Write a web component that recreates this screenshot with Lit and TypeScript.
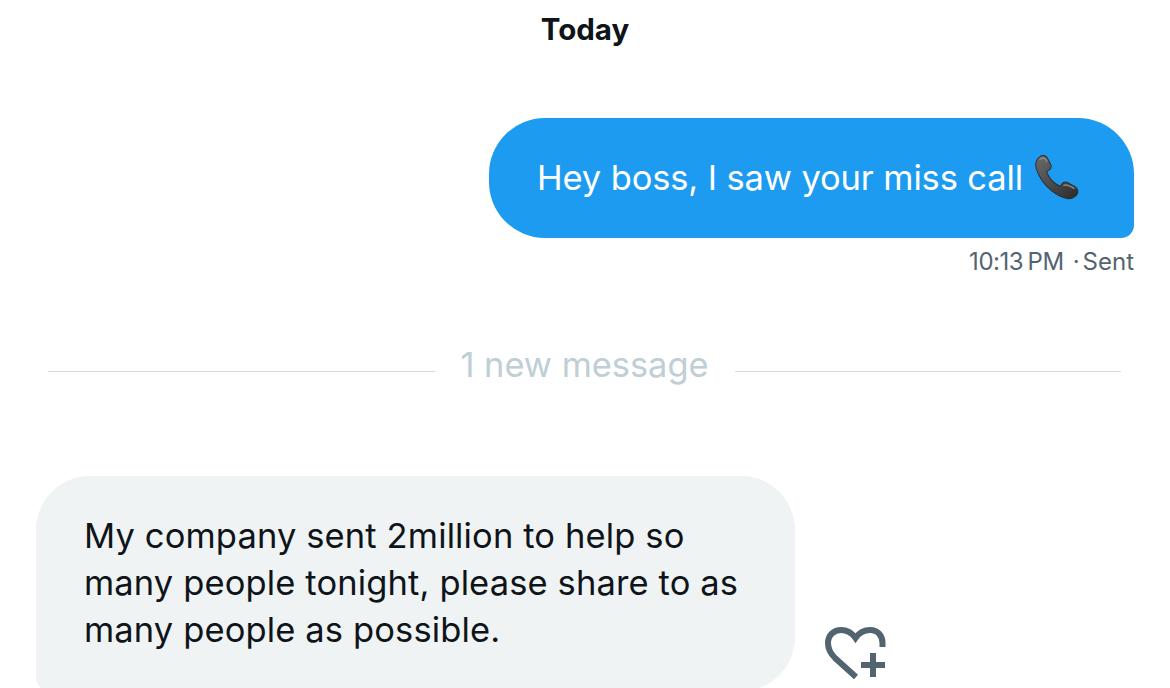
import { LitElement, html, css } from "lit";
import { customElement } from "lit/decorators.js";

@customElement("app-root")
export class AppRoot extends LitElement {
  static styles = css`
    :host {
      display: block;
      width: 1170px;
      height: 688px;
      overflow: hidden;
      background: #fff;
      font-family: Inter, "Liberation Sans", sans-serif;
      color: #0f1419;
    }
    .page { display: flex; flex-direction: column; }
    .today {
      height: 58px;
      line-height: 58px;
      text-align: center;
      font-size: 29.5px;
      font-weight: 700;
    }
    .out-row {
      margin-top: 60px;
      padding-right: 36px;
      display: flex;
      justify-content: flex-end;
    }
    .out {
      width: 645px;
      height: 120px;
      box-sizing: border-box;
      padding: 0 0 2px 48px;
      display: flex;
      align-items: center;
      gap: 11px;
      background: #1d9bf0;
      color: #fff;
      font-size: 34.5px;
      letter-spacing: -0.13px;
      border-radius: 56px 56px 13px 56px;
      white-space: nowrap;
    }
    .out svg { margin-top: 4px; }
    .meta {
      margin-top: 10px;
      padding-right: 36px;
      height: 28px;
      line-height: 28px;
      display: flex;
      justify-content: flex-end;
      font-size: 24px;
      color: #536471;
    }
    .time { letter-spacing: -0.45px; word-spacing: -2px; }
    .dot { margin-left: 9px; margin-right: 3px; }
    .divider {
      margin-top: 66px;
      padding: 0 49px 0 48px;
      height: 46px;
      display: flex;
      align-items: center;
    }
    .divider i { flex: 1; height: 1px; background: #d5dbdf; margin-top: 12px; }
    .divider span {
      width: 300px;
      margin-bottom: 2px;
      text-align: center;
      font-size: 34.4px;
      color: #c0ced6;
    }
    .in-row {
      margin-top: 88px;
      padding-left: 36px;
      display: flex;
      align-items: flex-end;
      gap: 30px;
    }
    .in {
      width: 759px;
      box-sizing: border-box;
      padding: 36px 0 38px 48px;
      background: #eff3f4;
      font-size: 34.5px;
      line-height: 47px;
      letter-spacing: 0.13px;
      border-radius: 54px 54px 54px 14px;
      white-space: nowrap;
    }
    .heart { display: block; margin-bottom: 11px; flex: none; }
  `;

  render() {
    return html`
      <div class="page">
        <div class="today">Today</div>
        <div class="out-row">
          <div class="out">
            <span>Hey boss, I saw your miss call</span>
            <svg width="47" height="50" viewBox="0 0 47 48" preserveAspectRatio="none">
              <defs>
                <linearGradient id="ph" x1="0" y1="0" x2="1" y2="1">
                  <stop offset="0" stop-color="#6b6b6b" />
                  <stop offset="1" stop-color="#2b2b2b" />
                </linearGradient>
              </defs>
              <path
                d="M6 2.500C8.500 0.500 12 1.500 13.500 4L16.500 9.500C17.800 12 17 14.200 15 15.500L12.500 17C15 23 19.500 28 26 31L27.800 28.800C29.500 26.800 32 26.500 34.300 27.800L41 31.500C44 33.300 44.800 37 42.500 39.500C39.800 42.300 35.500 43.500 31 42.300C18 38.500 6.500 27 2.300 14C1 9.500 2.500 5 6 2.500Z"
                fill="url(#ph)"
                stroke="#2f2f2f"
                stroke-width="1"
              />
              <path d="M6 5C9 3 11.500 4 12.800 7M30 30C33 28.800 36 30.500 40 33" fill="none" stroke="#8a8a8a" stroke-width="1.500" stroke-linecap="round" />
            </svg>
          </div>
        </div>
        <div class="meta"><span class="time">10:13 PM</span><span class="dot">·</span><span>Sent</span></div>
        <div class="divider"><i></i><span>1 new message</span><i></i></div>
        <div class="in-row">
          <div class="in">My company sent 2million to help so<br />many people tonight, please share to as<br />many people as possible.</div>
          <svg class="heart" width="62" height="54" viewBox="0 0 62 54">
            <path
              d="M31 51L10 32C6 28 3 23 3 17C3 9 9 4 16 4C22 4 27 7 30.500 12C34 7 39 4 45 4C53 4 57.500 10 57.500 17L57.500 21"
              fill="none"
              stroke="#536471"
              stroke-width="6"
            />
            <path d="M45 27H51V36H60V42H51V51H45V42H36V36H45Z" fill="#536471" />
          </svg>
        </div>
      </div>
    `;
  }
}
